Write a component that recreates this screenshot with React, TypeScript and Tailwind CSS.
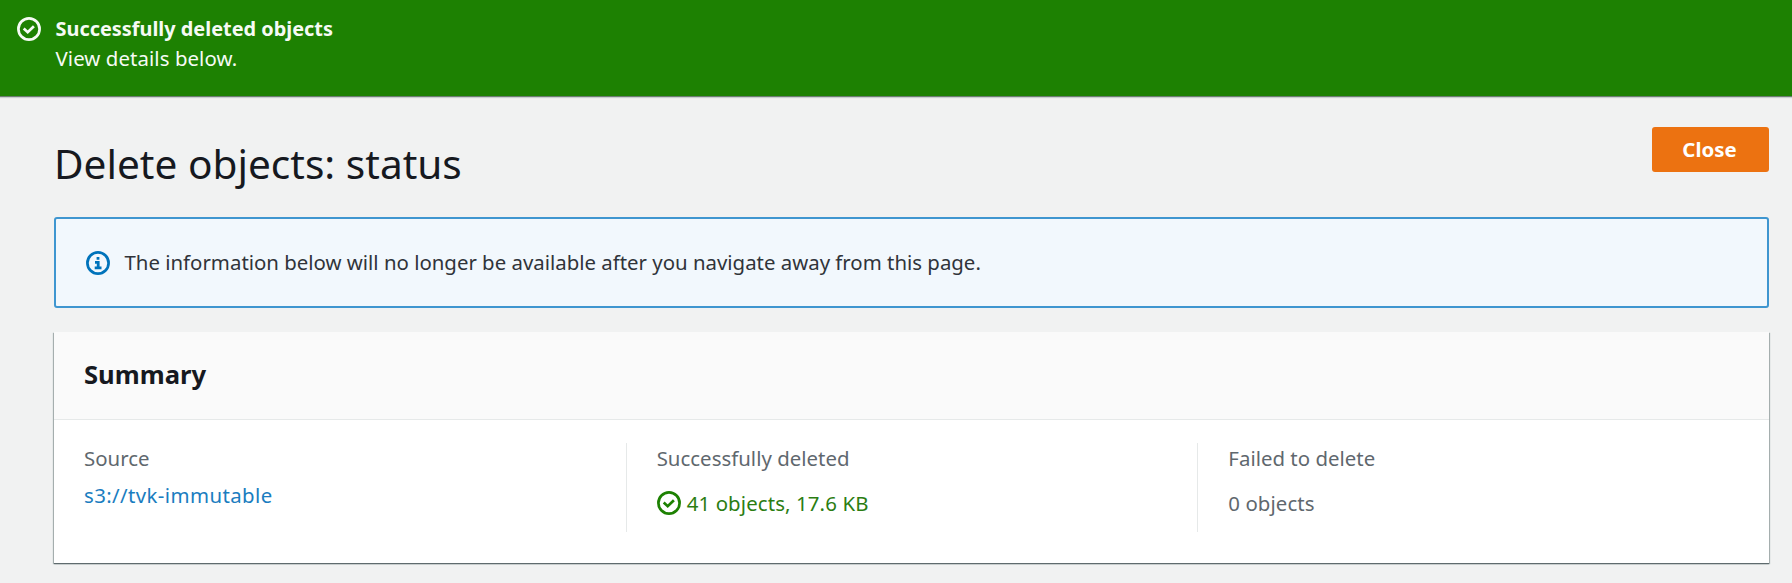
import type { ReactNode } from "react";

function CheckCircle({ className = "" }: { className?: string }) {
  return (
    <svg viewBox="0 0 24 24" fill="none" stroke="currentColor" className={`h-6 w-6 shrink-0 ${className}`}>
      <circle cx="12" cy="12" r="10.6" strokeWidth="2.7" />
      <path d="M6.7 11.6l4 3.6 6.2-6" strokeWidth="2.7" />
    </svg>
  );
}

function InfoCircle() {
  return (
    <svg viewBox="0 0 24 24" fill="none" stroke="currentColor" className="h-6 w-6 shrink-0 text-[#0073bb]">
      <circle cx="12" cy="12" r="10.6" strokeWidth="2.7" />
      <path d="M12 6v2.8M9 11.4h3.2v5.4M8.7 16.9h6.8" strokeWidth="2.8" />
    </svg>
  );
}

function Column({ label, children, divided = false }: { label: string; children: ReactNode; divided?: boolean }) {
  return (
    <div className={divided ? "h-[89px] border-l border-[#e6e9e9] pl-[30px]" : "h-[89px] pl-[30px]"}>
      <div className="leading-[30px] tracking-[0.02px] text-[#5f686e]">{label}</div>
      {children}
    </div>
  );
}

export default function App() {
  return (
    <div className="h-[583px] overflow-hidden whitespace-nowrap bg-[#f1f2f2] font-['Noto_Sans',sans-serif] text-[20.4px] text-[#16191f]">
      <header className="flex h-[97px] border-b border-[#6b7d70] bg-[#1d8102] pl-[16.5px] pt-[13px] text-[#f6fbf5] shadow-[0_1px_1px_#c9cfcf]">
        <CheckCircle className="mt-[3.5px]" />
        <div className="ml-[15px] leading-[30px]">
          <p className="pt-px text-[19.9px] font-bold leading-[29px]">Successfully deleted objects</p>
          <p className="tracking-[0.08px]">View details below.</p>
        </div>
      </header>

      <main className="pl-[54px] pr-[23px]">
        <div className="flex h-[120px] items-start justify-between">
          <h1 className="mt-[42px] text-[40.6px] leading-[49px]">Delete objects: status</h1>
          <button className="mt-[30px] h-[45px] w-[117px] rounded-[3px] bg-[#ec7211] pr-[2px] text-[20.4px] font-bold text-white">
            Close
          </button>
        </div>

        <section className="flex h-[91px] items-center rounded-[3px] border-2 border-[#3f96d0] bg-[#f2f8fd] pl-[29.5px]">
          <InfoCircle />
          <p className="ml-[15px] text-[#30343a]">
            The information below will no longer be available after you navigate away from this page.
          </p>
        </section>

        <section className="mt-6 h-[231px] bg-white shadow-[0_1px_1px_0_#5f6b6e,1px_1px_1px_0_#b4bcbc,-1px_1px_1px_0_#b4bcbc]">
          <h2 className="flex h-[88px] items-center border-b border-[#e6e9e9] bg-[#fafafa] pl-[30px] text-[25.6px] font-bold">
            Summary
          </h2>
          <div className="grid grid-cols-3 pt-[23px]">
            <Column label="Source">
              <a className="mt-[7px] block leading-[30px] tracking-[0.4px] text-[#1a7dc0]">s3://tvk-immutable</a>
            </Column>
            <Column label="Successfully deleted" divided>
              <div className="mt-[15px] flex items-center leading-[30px] tracking-[0.12px] text-[#2b7d12]">
                <CheckCircle className="mr-[6px] text-[#1d8102]" />
                41 objects, 17.6 KB
              </div>
            </Column>
            <Column label="Failed to delete" divided>
              <div className="mt-[15px] leading-[30px] tracking-[0.08px] text-[#5f686e]">0 objects</div>
            </Column>
          </div>
        </section>
      </main>
    </div>
  );
}
